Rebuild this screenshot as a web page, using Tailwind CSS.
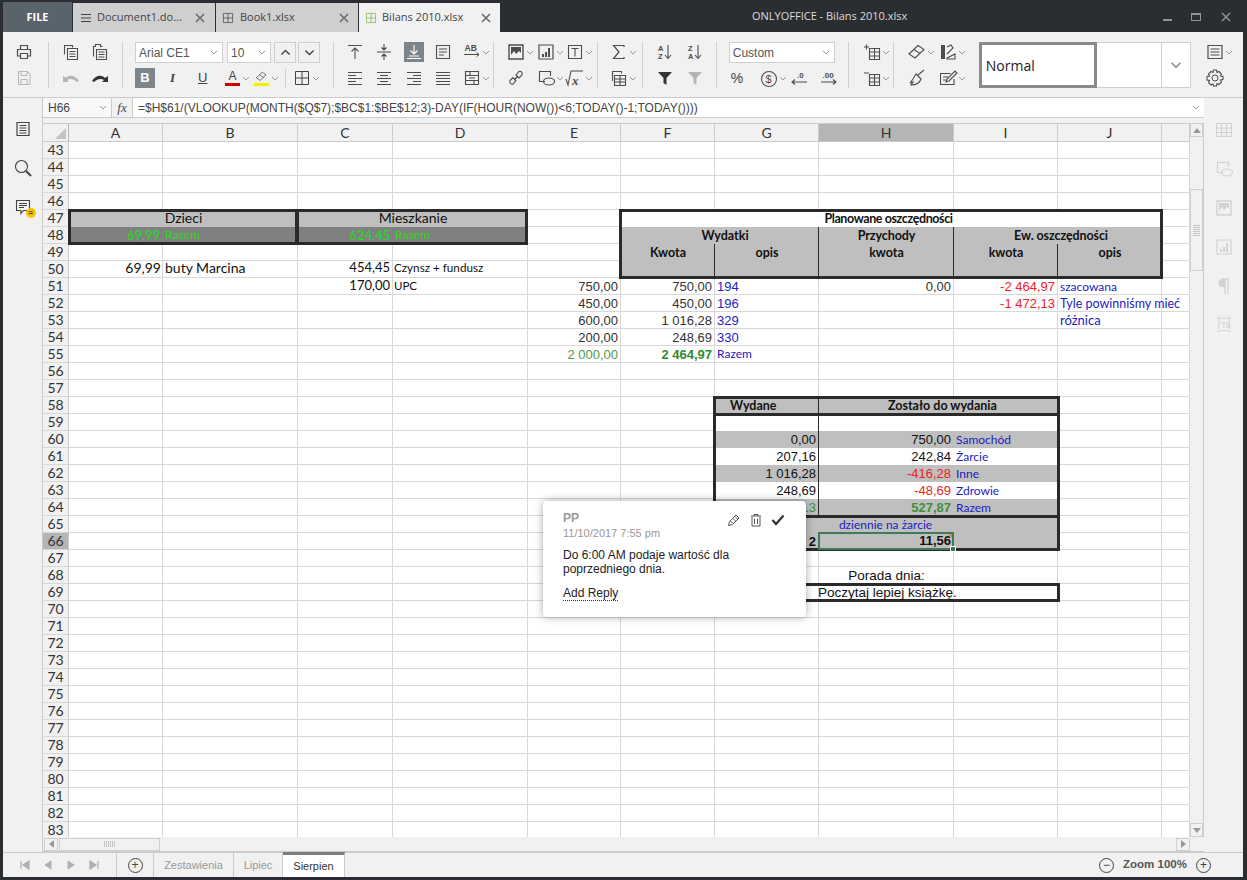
<!DOCTYPE html>
<html lang="en">
<head>
<meta charset="UTF-8">
<title>ONLYOFFICE - Bilans 2010.xlsx</title>
<script src="https://cdn.jsdelivr.net/npm/@tailwindcss/browser@4"></script>
</head>
<body class="bg-[#2a2e32] font-['Liberation_Sans',sans-serif] overflow-hidden">

<!-- icon set -->
<svg class="absolute w-0 h-0">
  <symbol id="c" viewBox="0 0 8 5"><path d="M1 1l3 3 3-3"/></symbol>
  <symbol id="x" viewBox="0 0 10 10"><path d="M1 1l8 8M9 1l-8 8" stroke-width="1.500"/></symbol>
  <symbol id="print" viewBox="0 0 20 20"><path d="M6.500 7V3.500h7V7M6.500 14h-3V7.500h13V14h-3M6.500 11.500h7v5h-7z" stroke-width="1.200"/></symbol>
  <symbol id="save" viewBox="0 0 20 20"><path d="M4.500 3.500h9l2.500 2.500v10.500H4.500zM7 3.500v4h6v-4M7 16.500v-5h6v5"/></symbol>
  <symbol id="copy" viewBox="0 0 20 20"><path d="M3.500 12.500v-9h8v2M6.500 6.500h10v11h-10zM8.500 9.500h6M8.500 12h6M8.500 14.500h6" stroke-width="1.100"/></symbol>
  <symbol id="paste" viewBox="0 0 20 20"><path d="M3.500 14.500v-10h2v-2h5v2h2M6.500 7.500h10v10h-10zM8.500 10h6M8.500 12.500h6M8.500 15h6" stroke-width="1.100"/></symbol>
  <symbol id="undo" viewBox="0 0 20 20"><path d="M2 8v6h6l-2-2c3-2 7-1 10 2l2-1c-3-5-9-7-13-3z" fill="currentColor" stroke="none"/></symbol>
  <symbol id="redo" viewBox="0 0 20 20"><path d="M18 8v6h-6l2-2c-3-2-7-1-10 2l-2-1c3-5 9-7 13-3z" fill="currentColor" stroke="none"/></symbol>
  <symbol id="atop" viewBox="0 0 20 20"><path d="M3 3.500h14M10 17V6.500M6.500 9.500L10 6l3.500 3.500" stroke-width="1.100"/></symbol>
  <symbol id="amid" viewBox="0 0 20 20"><path d="M3 10h14M10 2v5.500M7.500 5.500L10 8l2.500-2.500M10 18v-5.500M7.500 14.500L10 12l2.500 2.500" stroke-width="1.100"/></symbol>
  <symbol id="abot" viewBox="0 0 20 20"><path d="M3 16.500h14M5 14h10M10 3v9M6.500 8.500L10 12l3.500-3.500" stroke-width="1.100"/></symbol>
  <symbol id="wrap" viewBox="0 0 20 20"><path d="M3.500 3.500h13v13h-13zM6 7h8M6 10h8M6 13h5" stroke-width="1.100"/></symbol>
  <symbol id="left" viewBox="0 0 20 20"><path d="M3 4.500h14M3 7.500h8M3 10.500h14M3 13.500h8M3 16.500h14" stroke-width="1.100"/></symbol>
  <symbol id="center" viewBox="0 0 20 20"><path d="M3 4.500h14M6 7.500h8M3 10.500h14M6 13.500h8M3 16.500h14" stroke-width="1.100"/></symbol>
  <symbol id="right" viewBox="0 0 20 20"><path d="M3 4.500h14M9 7.500h8M3 10.500h14M9 13.500h8M3 16.500h14" stroke-width="1.100"/></symbol>
  <symbol id="just" viewBox="0 0 20 20"><path d="M3 4.500h14M3 7.500h14M3 10.500h14M3 13.500h14M3 16.500h14" stroke-width="1.100"/></symbol>
  <symbol id="merge" viewBox="0 0 20 20"><path d="M3.500 3.500h13v13h-13zM3.500 7.500h13M3.500 12.500h13M8 3.500v4M12 12.500v4M7 10h6" stroke-width="1.100"/></symbol>
  <symbol id="grid" viewBox="0 0 20 20"><path d="M3.500 3.500h13v13h-13zM10 3.500v13M3.500 10h13"/></symbol>
  <symbol id="img" viewBox="0 0 20 20"><path d="M3 3h14v14H3z" stroke-width="1.400"/><path d="M5 5h10v6l-2-2-3 3-2-3-3 4z" fill="currentColor" stroke="none"/></symbol>
  <symbol id="chart" viewBox="0 0 20 20"><path d="M3 3h14v14H3z" stroke-width="1.200"/><path d="M6 12h2v3H6zM9 10h2v5H9zM12 6h2v9h-2z" fill="currentColor" stroke="none"/></symbol>
  <symbol id="tbox" viewBox="0 0 20 20"><path d="M3.500 3.500h13v13h-13zM6.500 6.500h7M10 6.500v8" stroke-width="1.100"/></symbol>
  <symbol id="link" viewBox="0 0 20 20"><path d="M8 12l4-4M4 12.500l3-3 3 3-3 3.500c-2 1-4-1.500-3-3.500zM10 7l3-3.500c2-1 4 1.500 3 3.500l-3 3z" stroke-width="1.100"/></symbol>
  <symbol id="shape" viewBox="0 0 20 20"><path d="M9 13.500H3.500v-10h11V8" stroke-width="1.100"/><ellipse cx="13" cy="13.500" rx="5.500" ry="3.500" stroke-width="1.100"/></symbol>
  <symbol id="sum" viewBox="0 0 20 20"><path d="M15 5V3.500H4.500L10 10l-5.500 6.500H15V15" stroke-width="1.200"/></symbol>
  <symbol id="tbl" viewBox="0 0 20 20"><path d="M5.500 7.500h11v10h-11zM5.500 11h11M5.500 14h11M11 7.500v10M3.500 13V3.500h9v2" stroke-width="1.100"/></symbol>
  <symbol id="filter" viewBox="0 0 20 20"><path d="M3 4h14l-5.500 6v7l-3-2v-5z" fill="currentColor" stroke="none"/></symbol>
  <symbol id="cellp" viewBox="0 0 20 20"><path d="M7.500 6.500h10v11h-10zM7.500 10h10M7.500 14h10M12.500 6.500v11M2 5h5M4.500 2.500v5" stroke-width="1.100"/></symbol>
  <symbol id="cellm" viewBox="0 0 20 20"><path d="M7.500 6.500h10v11h-10zM7.500 10h10M7.500 14h10M12.500 6.500v11M2 5h5" stroke-width="1.100"/></symbol>
  <symbol id="eraser" viewBox="0 0 20 20"><path d="M2 12l9-8.500 6 4-9 8.500zM7 7.500l6 4" stroke-width="1.100"/></symbol>
  <symbol id="palette" viewBox="0 0 20 20"><path d="M3 3h4v14H3z" fill="currentColor" stroke="none"/><path d="M9 5l4-2 2 3-6 6M9 16l8-4v5H9z" stroke-width="1.100"/></symbol>
  <symbol id="brush" viewBox="0 0 20 20"><path d="M11 7l6-5M9 6l5 5c-1 3-4 6-10 6l2-3-3 1c2-2 4-6 6-9z" stroke-width="1.100"/></symbol>
  <symbol id="edit" viewBox="0 0 20 20"><path d="M16 11v5.500H2.500v-11h10M5 9h5M5 12h3M8 14l1-3 8-8 2 2-8 8z" stroke-width="1.100"/></symbol>
  <symbol id="list" viewBox="0 0 20 20"><path d="M3 3.500h14v13H3zM5.500 7h9M5.500 10h9M5.500 13h9" stroke-width="1.200"/></symbol>
  <symbol id="gear" viewBox="0 0 20 20"><circle cx="10" cy="10" r="3"/><path d="M8.500 2h3l.5 2.500 2-1 2.500 2.500-1 2 2.500.5v3l-2.500.5 1 2-2.500 2.500-2-1-.5 2.500h-3L8 16l-2 1-2.500-2.500 1-2L2 12V8.500L4.500 8l-1-2L6 3.500l2 1z" stroke-width="1.100"/></symbol>
  <symbol id="doc" viewBox="0 0 20 20"><path d="M4 3.500h12v13H4zM6.500 6.500h7M6.500 9h7M6.500 11.500h7M6.500 14h7" stroke-width="1.200"/></symbol>
  <symbol id="search" viewBox="0 0 20 20"><circle cx="8.500" cy="8.500" r="6" stroke-width="1.100"/><path d="M13 13l5 5" stroke-width="2"/></symbol>
  <symbol id="bubble" viewBox="0 0 20 20"><path d="M3.500 3.500h13v10h-6L8 16.500v-3H3.500zM6 6.500h8M6 8.500h8M6 10.500h5" stroke-width="1.100"/></symbol>
  <symbol id="sheet" viewBox="0 0 20 20"><path d="M2.500 3.500h15v13h-15zM2.500 8h15M2.500 12.500h15M7.500 3.500v13M12.500 3.500v13"/></symbol>
  <symbol id="para" viewBox="0 0 20 20"><path d="M8 3h7M11 3v15M14 3v15" stroke-width="1.300"/><path d="M11 3H8.500a4 4 0 000 8H11z" fill="currentColor" stroke="none"/></symbol>
</svg>

<div class="relative w-[1247px] h-[880px] flex flex-col pl-[3px] pr-[4px] pb-[3px] [&_svg]:fill-none [&_svg]:stroke-current">

  <!-- title bar -->
  <div class="relative h-[32px] flex items-end shrink-0 text-[11px] font-['Open_Sans',sans-serif] whitespace-nowrap">
    <div class="w-[69px] h-[30px] bg-[#59636b] text-white font-bold flex items-center justify-center">FILE</div>
    <div class="w-[142px] h-[29px] ml-px bg-[#cfcfcf] text-[#444] flex items-center pl-[6px]">
      <svg class="size-[14px] text-[#444]"><path d="M2 3.500h10M2 7h10M2 10.500h10"/></svg>
      <span class="ml-[4px] w-[98px]">Document1.do...</span>
      <svg class="size-[10px] text-[#666]"><use href="#x"/></svg>
    </div>
    <div class="w-[142px] h-[29px] ml-px bg-[#cfcfcf] text-[#444] flex items-center pl-[5px]">
      <svg class="size-[14px] text-[#444]"><use href="#grid"/></svg>
      <span class="ml-[5px] w-[99px]">Book1.xlsx</span>
      <svg class="size-[10px] text-[#666]"><use href="#x"/></svg>
    </div>
    <div class="w-[141px] h-[29px] ml-px bg-[#f1f1f1] text-[#444] flex items-center pl-[5px]">
      <svg class="size-[14px] text-[#7cb342]"><use href="#grid"/></svg>
      <span class="ml-[4px] w-[99px]">Bilans 2010.xlsx</span>
      <svg class="size-[10px] text-[#666]"><use href="#x"/></svg>
    </div>
    <div class="ml-[252px] h-[32px] flex items-center text-[#dcdcdc]">ONLYOFFICE - Bilans 2010.xlsx</div>
    <div class="absolute right-0 top-0 h-[34px] flex items-center text-[#8f9396]">
      <span class="w-[9px] h-[2px] bg-current mr-[19px] mt-[6px]"></span>
      <span class="w-[10px] h-[8px] border border-current border-t-2 mr-[20px]"></span>
      <svg class="size-[10px] mr-[12px]"><use href="#x"/></svg>
    </div>
  </div>

  <!-- toolbar -->
  <div class="h-[66px] shrink-0 bg-[#f1f1f1] flex items-start pt-[10px] border-b border-[#cbcbcb] text-[#4d4d4d]">
    <div class="ml-[11px] grid grid-cols-[20px] grid-rows-[20px_20px] gap-y-[6px]">
      <svg class="size-5"><use href="#print"/></svg>
      <svg class="size-5 text-[#b5b5b5]"><use href="#save"/></svg>
    </div>
    <div class="ml-[14px] w-px h-[46px] bg-[#cfcfcf]"></div>
    <div class="ml-[12px] grid grid-cols-[29px_29px] grid-rows-[20px_20px] gap-y-[6px]">
      <svg class="size-5"><use href="#copy"/></svg>
      <svg class="size-5"><use href="#paste"/></svg>
      <svg class="size-5 text-[#b5b5b5]"><use href="#undo"/></svg>
      <svg class="size-5 text-[#333]"><use href="#redo"/></svg>
    </div>
    <div class="ml-[3px] w-px h-[46px] bg-[#cfcfcf]"></div>
    <div class="ml-[12px] w-[186px] flex flex-col gap-[5px]">
      <div class="flex h-[21px] text-[12px] text-[#555]">
        <div class="w-[88px] bg-white border border-[#cfcfcf] flex items-center justify-between pl-[3px] pr-[4px]">Arial CE1<svg class="w-2 h-[5px] text-[#999]"><use href="#c"/></svg></div>
        <div class="ml-[4px] w-[44px] bg-white border border-[#cfcfcf] flex items-center justify-between pl-[3px] pr-[4px]">10<svg class="w-2 h-[5px] text-[#999]"><use href="#c"/></svg></div>
        <div class="ml-[3px] w-[22px] border border-[#cfcfcf] flex items-center justify-center"><svg class="w-[11px] h-[7px] rotate-180 text-[#444]"><use href="#c"/></svg></div>
        <div class="ml-[2px] w-[22px] border border-[#cfcfcf] flex items-center justify-center"><svg class="w-[11px] h-[7px] text-[#444]"><use href="#c"/></svg></div>
      </div>
      <div class="flex items-center h-[20px] text-[13px] text-[#444]">
        <div class="w-5 h-5 bg-[#7d858c] text-white font-bold flex items-center justify-center">B</div>
        <div class="ml-2 w-[29px] pl-[7px] italic font-['Liberation_Serif',serif] font-bold">I</div>
        <div class="w-[30px] pl-[6px] underline">U</div>
        <div class="w-[29px] flex items-center">
          <span class="w-[15px] ml-[3px] text-center leading-[13px] border-b-[3px] border-[#d40000] text-[12px]">A</span>
          <svg class="ml-[2px] w-2 h-[5px] text-[#999]"><use href="#c"/></svg>
        </div>
        <div class="w-[34px] flex items-center">
          <span class="ml-[3px] w-[15px] border-b-[3px] border-[#f5f000] flex justify-center"><svg class="size-[13px]"><use href="#eraser"/></svg></span>
          <svg class="ml-[2px] w-2 h-[5px] text-[#999]"><use href="#c"/></svg>
        </div>
        <div class="w-px h-5 bg-[#cfcfcf]"></div>
        <svg class="ml-[6px] size-5"><use href="#grid"/></svg>
        <svg class="w-2 h-[5px] text-[#999]"><use href="#c"/></svg>
      </div>
    </div>
    <div class="ml-[12px] w-px h-[46px] bg-[#cfcfcf]"></div>
    <div class="ml-[11px] grid grid-cols-[repeat(5,29.25px)] grid-rows-[20px_20px] gap-y-[6px] items-center">
      <svg class="size-5"><use href="#atop"/></svg>
      <svg class="size-5"><use href="#amid"/></svg>
      <span class="w-5 h-5 bg-[#7d858c] text-white"><svg class="size-5"><use href="#abot"/></svg></span>
      <svg class="size-5"><use href="#wrap"/></svg>
      <span class="flex items-center">
        <svg class="size-5" viewBox="0 0 20 20"><text x="2.500" y="9" font-size="8.500" font-weight="700" fill="currentColor" stroke="none">AB</text><path d="M2 12.500h15M14.500 10.500l2.500 2-2.500 2"/></svg>
        <svg class="w-2 h-[5px] text-[#999]"><use href="#c"/></svg>
      </span>
      <svg class="size-5"><use href="#left"/></svg>
      <svg class="size-5"><use href="#center"/></svg>
      <svg class="size-5"><use href="#right"/></svg>
      <svg class="size-5"><use href="#just"/></svg>
      <span class="flex items-center"><svg class="size-5"><use href="#merge"/></svg><svg class="w-2 h-[5px] text-[#999]"><use href="#c"/></svg></span>
    </div>
    <div class="ml-[2px] w-px h-[46px] bg-[#cfcfcf]"></div>
    <div class="ml-[12px] grid grid-cols-[repeat(3,29.5px)] grid-rows-[20px_20px] gap-y-[6px] items-center">
      <span class="flex items-center"><svg class="size-5"><use href="#img"/></svg><svg class="w-2 h-[5px] text-[#999]"><use href="#c"/></svg></span>
      <span class="flex items-center"><svg class="size-5"><use href="#chart"/></svg><svg class="w-2 h-[5px] text-[#999]"><use href="#c"/></svg></span>
      <span class="flex items-center"><svg class="size-5"><use href="#tbox"/></svg><svg class="w-2 h-[5px] text-[#999]"><use href="#c"/></svg></span>
      <svg class="size-5"><use href="#link"/></svg>
      <span class="flex items-center"><svg class="size-5"><use href="#shape"/></svg><svg class="w-2 h-[5px] text-[#999]"><use href="#c"/></svg></span>
      <span class="flex items-center">
        <svg class="size-5" viewBox="0 0 20 20"><path d="M1 11l2 6 3-14h12" stroke-width="1.100"/><text x="7" y="17" font-size="13" font-weight="700" font-style="italic" fill="currentColor" stroke="none" font-family="Liberation Serif">x</text></svg>
        <svg class="w-2 h-[5px] text-[#999]"><use href="#c"/></svg>
      </span>
    </div>
    <div class="ml-[2px] w-px h-[46px] bg-[#cfcfcf]"></div>
    <div class="ml-[11px] grid grid-cols-[29px] grid-rows-[20px_20px] gap-y-[6px] items-center">
      <span class="flex items-center"><svg class="size-5"><use href="#sum"/></svg><svg class="w-2 h-[5px] text-[#999]"><use href="#c"/></svg></span>
      <span class="flex items-center"><svg class="size-5"><use href="#tbl"/></svg><svg class="w-2 h-[5px] text-[#999]"><use href="#c"/></svg></span>
    </div>
    <div class="ml-[4px] w-px h-[46px] bg-[#cfcfcf]"></div>
    <div class="ml-[12px] grid grid-cols-[30px_30px] grid-rows-[20px_20px] gap-y-[6px]">
      <svg class="size-5" viewBox="0 0 20 20"><text x="3" y="9" font-size="7.500" font-weight="700" fill="currentColor" stroke="none">A</text><text x="3" y="17" font-size="7.500" font-weight="700" fill="currentColor" stroke="none">Z</text><path d="M13 3v13M10 13l3 3.500 3-3.500" stroke-width="1.100"/></svg>
      <svg class="size-5" viewBox="0 0 20 20"><text x="3" y="9" font-size="7.500" font-weight="700" fill="currentColor" stroke="none">Z</text><text x="3" y="17" font-size="7.500" font-weight="700" fill="currentColor" stroke="none">A</text><path d="M13 3v13M10 13l3 3.500 3-3.500" stroke-width="1.100"/></svg>
      <svg class="size-5 text-[#333]"><use href="#filter"/></svg>
      <svg class="size-5 text-[#b5b5b5]"><use href="#filter"/></svg>
    </div>
    <div class="ml-[1px] w-px h-[46px] bg-[#cfcfcf]"></div>
    <div class="ml-[12px] w-[106px] flex flex-col gap-[5px]">
      <div class="h-[21px] bg-white border border-[#cfcfcf] text-[12px] text-[#555] flex items-center justify-between pl-[3px] pr-[4px]">Custom<svg class="w-2 h-[5px] text-[#999]"><use href="#c"/></svg></div>
      <div class="grid grid-cols-[repeat(4,30px)] h-5 items-center">
        <span class="text-[14px] pl-[2px] text-[#444]">%</span>
        <span class="flex items-center">
          <svg class="size-5" viewBox="0 0 20 20"><circle cx="10" cy="10" r="7.500" stroke-width="1.100"/><text x="6.500" y="14" font-size="11" fill="currentColor" stroke="none">$</text></svg>
          <svg class="w-2 h-[5px] text-[#999]"><use href="#c"/></svg>
        </span>
        <svg class="size-5" viewBox="0 0 20 20"><text x="8" y="9" font-size="8" font-weight="700" fill="currentColor" stroke="none">.0</text><path d="M18 13H3M6 10.500L3 13l3 2.500" stroke-width="1.100"/></svg>
        <svg class="size-5" viewBox="0 0 20 20"><text x="3.500" y="9" font-size="8" font-weight="700" fill="currentColor" stroke="none">.00</text><path d="M2 13h15M14 10.500l3 2.500-3 2.500" stroke-width="1.100"/></svg>
      </div>
    </div>
    <div class="ml-[13px] w-px h-[46px] bg-[#cfcfcf]"></div>
    <div class="ml-[13px] grid grid-cols-[29px] grid-rows-[20px_20px] gap-y-[6px] items-center">
      <span class="flex items-center"><svg class="size-5"><use href="#cellp"/></svg><svg class="w-2 h-[5px] text-[#999]"><use href="#c"/></svg></span>
      <span class="flex items-center"><svg class="size-5"><use href="#cellm"/></svg><svg class="w-2 h-[5px] text-[#999]"><use href="#c"/></svg></span>
    </div>
    <div class="ml-[2px] w-px h-[46px] bg-[#cfcfcf]"></div>
    <div class="ml-[13px] grid grid-cols-[31px_31px] grid-rows-[20px_20px] gap-y-[6px] items-center">
      <span class="flex items-center"><svg class="size-5"><use href="#eraser"/></svg><svg class="w-2 h-[5px] text-[#999]"><use href="#c"/></svg></span>
      <span class="flex items-center"><svg class="size-5"><use href="#palette"/></svg><svg class="w-2 h-[5px] text-[#999]"><use href="#c"/></svg></span>
      <svg class="size-5"><use href="#brush"/></svg>
      <span class="flex items-center"><svg class="size-5"><use href="#edit"/></svg><svg class="w-2 h-[5px] text-[#999]"><use href="#c"/></svg></span>
    </div>
    <div class="ml-[10px] w-[212px] h-[46px] flex bg-white border border-[#cfcfcf]">
      <div class="w-[118px] -ml-px -my-px border-[3px] border-[#8a8a8a] flex items-center pl-[4px] text-[14px] text-[#222] font-['Open_Sans',sans-serif]">Normal</div>
      <div class="w-[65px] border-r border-[#cfcfcf]"></div>
      <div class="flex-1 flex items-center justify-center"><svg class="w-[12px] h-[8px] text-[#888]"><use href="#c"/></svg></div>
    </div>
    <div class="ml-[14px] grid grid-cols-[28px] grid-rows-[20px_20px] gap-y-[6px] items-center">
      <span class="flex items-center"><svg class="size-5"><use href="#list"/></svg><svg class="w-2 h-[5px] text-[#999]"><use href="#c"/></svg></span>
      <svg class="size-5"><use href="#gear"/></svg>
    </div>
  </div>

  <!-- main area -->
  <div class="flex-1 min-h-0 flex bg-[#f1f1f1]">
    <!-- left rail -->
    <div class="w-[40px] shrink-0 flex flex-col items-center pt-[21px] gap-[19px] text-[#444] border-r border-[#cbcbcb]">
      <svg class="size-5"><use href="#doc"/></svg>
      <svg class="size-5"><use href="#search"/></svg>
      <span class="relative size-5">
        <svg class="size-5"><use href="#bubble"/></svg>
        <span class="absolute right-[-3px] bottom-[-1px] w-[10px] h-[10px] rounded-full bg-[#f5c400] text-[8px] leading-[9px] text-center font-bold text-[#444]">=</span>
      </span>
    </div>

    <!-- centre -->
    <div class="flex-1 min-w-0 flex flex-col">
      <!-- formula bar -->
      <div class="h-[25px] shrink-0 pb-[5px]">
        <div class="h-[20px] flex bg-white border-b border-[#cbcbcb] text-[12px] text-[#444]">
          <div class="w-[69px] bg-[#f8f8f8] border-r border-[#cbcbcb] flex items-center justify-between pl-[5px] pr-[4px]">H66<svg class="w-2 h-[5px] text-[#999]"><use href="#c"/></svg></div>
          <div class="w-[21px] bg-[#f1f1f1] border-r border-[#cbcbcb] flex items-center justify-center italic font-['Liberation_Serif',serif] text-[13px]">fx</div>
          <div class="flex-1 flex items-center justify-between pl-[5px] pr-[4px] whitespace-nowrap">=$H$61/(VLOOKUP(MONTH($Q$7);$BC$1:$BE$12;3)-DAY(IF(HOUR(NOW())&lt;6;TODAY()-1;TODAY())))<svg class="w-2 h-[5px] text-[#999]"><use href="#c"/></svg></div>
        </div>
      </div>

      <div class="flex-1 min-h-0 flex">
        <div class="flex-1 min-w-0 overflow-hidden bg-white">
          <!-- column headers -->
          <div class="h-[19px] flex bg-[#f1f1f1] border-y border-[#cbcbcb] font-['Lato',sans-serif] text-[14px] text-[#333] leading-[17px]">
            <div class="relative w-[26px] border-r border-[#b5b5b5]"><span class="absolute right-[2px] bottom-[2px] w-0 h-0 border-l-[11px] border-l-transparent border-b-[11px] border-b-[#c4c4c4]"></span></div>
            <div class="grid grid-cols-[94px_135px_95px_135px_93px_94px_104px_135px_104px_104px_28px] text-center [&>div]:border-r [&>div]:border-[#cbcbcb]">
              <div>A</div><div>B</div><div>C</div><div>D</div><div>E</div><div>F</div><div>G</div><div class="bg-[#b5b5b5]">H</div><div>I</div><div>J</div><div></div>
            </div>
          </div>

          <div class="flex">
            <!-- row headers -->
            <div class="w-[26px] shrink-0 bg-[#f1f1f1] border-r border-[#cbcbcb] font-['Lato',sans-serif] text-[14px] text-[#333] text-center leading-[16px] [&>div]:h-[17px] [&>div]:border-b [&>div]:border-[#d8d8d8]">
              <div>43</div><div>44</div><div>45</div><div>46</div><div>47</div><div>48</div><div>49</div><div>50</div><div>51</div><div>52</div><div>53</div><div>54</div><div>55</div><div>56</div><div>57</div><div>58</div><div>59</div><div>60</div><div>61</div><div>62</div><div>63</div><div>64</div><div>65</div><div class="bg-[#b5b5b5]">66</div><div>67</div><div>68</div><div>69</div><div>70</div><div>71</div><div>72</div><div>73</div><div>74</div><div>75</div><div>76</div><div>77</div><div>78</div><div>79</div><div>80</div><div>81</div><div>82</div><div>83</div>
            </div>

            <!-- sheet -->
            <div class="grid grid-cols-[94px_135px_95px_135px_93px_94px_104px_135px_104px_104px_28px] grid-rows-[repeat(41,17px)] text-[13px] leading-[18px] whitespace-nowrap text-[#111]">
              <!-- grid lines -->
              <div class="col-start-1 col-span-full row-start-1 row-span-full flex flex-col [&>div]:h-[17px] [&>div]:shrink-0 [&>div]:border-b [&>div]:border-[#d8d8d8]">
                <div></div><div></div><div></div><div></div><div></div><div></div><div></div><div></div><div></div><div></div><div></div><div></div><div></div><div></div><div></div><div></div><div></div><div></div><div></div><div></div><div></div><div></div><div></div><div></div><div></div><div></div><div></div><div></div><div></div><div></div><div></div><div></div><div></div><div></div><div></div><div></div><div></div><div></div><div></div><div></div><div></div>
              </div>
              <div class="col-start-1 col-span-full row-start-1 row-span-full grid grid-cols-subgrid [&>div]:border-r [&>div]:border-[#d8d8d8]">
                <div></div><div></div><div></div><div></div><div></div><div></div><div></div><div></div><div></div><div></div><div></div>
              </div>

              <!-- Dzieci / Mieszkanie -->
              <div class="col-start-1 col-span-2 row-start-5 bg-[#bfbfbf] text-center font-['Lato',sans-serif] text-[14px] leading-[16px]">Dzieci</div>
              <div class="col-start-3 col-span-2 row-start-5 bg-[#bfbfbf] text-center font-['Lato',sans-serif] text-[14px] leading-[16px]">Mieszkanie</div>
              <div class="col-start-1 row-start-6 bg-[#808080] text-right pr-[3px] text-[#22dd22] font-['Lato',sans-serif] leading-[16px]">69,99</div>
              <div class="col-start-2 row-start-6 bg-[#808080] pl-[2px] text-[#22dd22] font-['Lato',sans-serif] text-[12px] leading-[16px]">Razem</div>
              <div class="col-start-3 row-start-6 bg-[#808080] text-right pr-[3px] text-[#22dd22] font-['Lato',sans-serif] leading-[16px]">624,45</div>
              <div class="col-start-4 row-start-6 bg-[#808080] pl-[2px] text-[#22dd22] font-['Lato',sans-serif] text-[12px] leading-[16px]">Razem</div>
              <div class="col-start-1 col-span-2 row-start-5 row-span-2 -mt-px -ml-px h-[36px] border-[3px] border-[#2a2a2a]"></div>
              <div class="col-start-3 col-span-2 row-start-5 row-span-2 -mt-px -ml-[2px] h-[36px] border-[3px] border-[#2a2a2a]"></div>

              <div class="col-start-1 row-start-8 text-right pr-[2px] font-['Lato',sans-serif] text-[14px] leading-[13px]">69,99</div>
              <div class="col-start-2 row-start-8 pl-[2px] font-['Lato',sans-serif] text-[14px] leading-[13px]">buty Marcina</div>
              <div class="col-start-3 row-start-8 text-right pr-[3px] font-['Lato',sans-serif] text-[13px] leading-[13px]">454,45</div>
              <div class="col-start-4 row-start-8 pl-[1px] font-['Lato',sans-serif] text-[11.7px] leading-[13px]">Czynsz + fundusz</div>
              <div class="col-start-3 row-start-9 text-right pr-[3px] font-['Lato',sans-serif] text-[13px] leading-[15px]">170,00</div>
              <div class="col-start-4 row-start-9 pl-[1px] font-['Lato',sans-serif] text-[11.5px] leading-[16px]">UPC</div>

              <!-- Planowane oszczednosci -->
              <div class="col-start-6 col-span-5 row-start-5 bg-white text-center font-bold font-['Lato',sans-serif] text-[12.5px] tracking-[-0.4px] pr-[6px]">Planowane oszczędności</div>
              <div class="col-start-6 col-span-2 row-start-6 bg-[#bfbfbf] text-center font-bold font-['Lato',sans-serif] text-[12.5px] pl-[10px]">Wydatki</div>
              <div class="col-start-8 row-start-6 bg-[#bfbfbf] text-center font-bold font-['Lato',sans-serif] text-[12.5px] tracking-[-0.1px]">Przychody</div>
              <div class="col-start-9 col-span-2 row-start-6 bg-[#bfbfbf] text-center font-bold font-['Lato',sans-serif] text-[12.5px] tracking-[-0.1px] pl-[6px]">Ew. oszczędności</div>
              <div class="col-start-6 row-start-7 row-span-2 bg-[#bfbfbf] text-center font-bold font-['Lato',sans-serif] text-[12.5px]">Kwota</div>
              <div class="col-start-7 row-start-7 row-span-2 bg-[#bfbfbf] text-center font-bold font-['Lato',sans-serif] text-[12.5px] border-l border-[#2a2a2a] -ml-px">opis</div>
              <div class="col-start-8 row-start-7 row-span-2 bg-[#bfbfbf] text-center font-bold font-['Lato',sans-serif] text-[12.5px]">kwota</div>
              <div class="col-start-9 row-start-7 row-span-2 bg-[#bfbfbf] text-center font-bold font-['Lato',sans-serif] text-[12.5px]">kwota</div>
              <div class="col-start-10 row-start-7 row-span-2 bg-[#bfbfbf] text-center font-bold font-['Lato',sans-serif] text-[12.5px] border-l border-[#2a2a2a] -ml-px">opis</div>
              <div class="col-start-8 row-start-6 row-span-3 border-x border-[#2a2a2a] -ml-px"></div>
              <div class="col-start-6 col-span-5 row-start-5 row-span-4 -mt-px -ml-[2px] mr-[-1px] h-[70px] border-[3px] border-[#2a2a2a]"></div>

              <!-- values 51-55 -->
              <div class="col-start-5 row-start-9 text-right pr-[3px] text-[#333]">750,00</div>
              <div class="col-start-6 row-start-9 text-right pr-[3px] text-[#333]">750,00</div>
              <div class="col-start-7 row-start-9 pl-[2px] text-[#1c1cc4]">194</div>
              <div class="col-start-8 row-start-9 text-right pr-[3px] text-[#333]">0,00</div>
              <div class="col-start-9 row-start-9 text-right pr-[3px] text-[#ee2222]">-2 464,97</div>
              <div class="col-start-10 row-start-9 pl-[2px] text-[#1c1cc4] font-['Lato',sans-serif] text-[12px]">szacowana</div>
              <div class="col-start-5 row-start-10 text-right pr-[3px] text-[#333]">450,00</div>
              <div class="col-start-6 row-start-10 text-right pr-[3px] text-[#333]">450,00</div>
              <div class="col-start-7 row-start-10 pl-[2px] text-[#1c1cc4]">196</div>
              <div class="col-start-9 row-start-10 text-right pr-[3px] text-[#ee2222]">-1 472,13</div>
              <div class="col-start-10 col-span-2 row-start-10 pl-[2px] text-[#1c1cc4] font-['Lato',sans-serif] text-[12.5px]">Tyle powinniśmy mieć</div>
              <div class="col-start-5 row-start-11 text-right pr-[3px] text-[#333]">600,00</div>
              <div class="col-start-6 row-start-11 text-right pr-[3px] text-[#333]">1 016,28</div>
              <div class="col-start-7 row-start-11 pl-[2px] text-[#1c1cc4]">329</div>
              <div class="col-start-10 row-start-11 pl-[2px] text-[#1c1cc4] font-['Lato',sans-serif] leading-[16px]">różnica</div>
              <div class="col-start-5 row-start-12 text-right pr-[3px] text-[#333]">200,00</div>
              <div class="col-start-6 row-start-12 text-right pr-[3px] text-[#333]">248,69</div>
              <div class="col-start-7 row-start-12 pl-[2px] text-[#1c1cc4]">330</div>
              <div class="col-start-5 row-start-13 text-right pr-[3px] text-[#4c9a4c]">2 000,00</div>
              <div class="col-start-6 row-start-13 text-right pr-[3px] text-[#2e8b2e] font-bold">2 464,97</div>
              <div class="col-start-7 row-start-13 pl-[2px] text-[#1c1cc4] font-['Lato',sans-serif] text-[12px] leading-[16px]">Razem</div>

              <!-- Wydane -->
              <div class="col-start-7 row-start-16 bg-[#bfbfbf] pl-[15px] font-bold font-['Lato',sans-serif] text-[12.5px]">Wydane</div>
              <div class="col-start-8 col-span-2 row-start-16 bg-[#bfbfbf] pl-[69px] font-bold font-['Lato',sans-serif] text-[12.5px]">Zostało do wydania</div>
              <div class="col-start-7 col-span-3 row-start-17 bg-white"></div>
              <div class="col-start-7 row-start-18 bg-[#bfbfbf] text-right pr-[3px]">0,00</div>
              <div class="col-start-8 row-start-18 bg-[#bfbfbf] text-right pr-[3px]">750,00</div>
              <div class="col-start-9 row-start-18 bg-[#bfbfbf] pl-[2px] text-[#1c1cc4] font-['Lato',sans-serif] text-[12px]">Samochód</div>
              <div class="col-start-7 row-start-19 bg-white text-right pr-[3px]">207,16</div>
              <div class="col-start-8 row-start-19 bg-white text-right pr-[3px]">242,84</div>
              <div class="col-start-9 row-start-19 bg-white pl-[2px] text-[#1c1cc4] font-['Lato',sans-serif] text-[12px]">Żarcie</div>
              <div class="col-start-7 row-start-20 bg-[#bfbfbf] text-right pr-[3px]">1 016,28</div>
              <div class="col-start-8 row-start-20 bg-[#bfbfbf] text-right pr-[3px] text-[#ee2222]">-416,28</div>
              <div class="col-start-9 row-start-20 bg-[#bfbfbf] pl-[2px] text-[#1c1cc4] font-['Lato',sans-serif] text-[12px]">Inne</div>
              <div class="col-start-7 row-start-21 bg-white text-right pr-[3px]">248,69</div>
              <div class="col-start-8 row-start-21 bg-white text-right pr-[3px] text-[#ee2222]">-48,69</div>
              <div class="col-start-9 row-start-21 bg-white pl-[2px] text-[#1c1cc4] font-['Lato',sans-serif] text-[12px]">Zdrowie</div>
              <div class="col-start-7 row-start-22 bg-[#bfbfbf] text-right pr-[3px] text-[#3f8f3f]">13</div>
              <div class="col-start-8 row-start-22 bg-[#bfbfbf] text-right pr-[3px] text-[#3f8f3f] font-bold">527,87</div>
              <div class="col-start-9 row-start-22 bg-[#bfbfbf] pl-[2px] text-[#1c1cc4] font-['Lato',sans-serif] text-[12px]">Razem</div>
              <div class="col-start-7 col-span-3 row-start-23 row-span-2 bg-[#bfbfbf]"></div>
              <div class="col-start-8 row-start-23 text-center text-[#1c1cc4] font-['Lato',sans-serif] text-[12px] pr-[2px]">dziennie na żarcie</div>
              <div class="col-start-7 row-start-24 text-right pr-[3px] font-bold">2</div>
              <div class="col-start-8 row-start-16 row-span-7 border-l border-[#2a2a2a] -ml-px"></div>
              <div class="col-start-7 col-span-3 row-start-16 h-[19px] border-b-[3px] border-[#2a2a2a]"></div>
              <div class="col-start-7 col-span-3 row-start-23 -mt-px h-[3px] bg-[#2a2a2a]"></div>
              <div class="col-start-7 col-span-3 row-start-16 row-span-9 -mt-px -ml-[2px] mr-[-2px] h-[155px] border-[3px] border-[#2a2a2a]"></div>

              <!-- selected cell H66 -->
              <div class="relative col-start-8 row-start-24 -ml-px -mt-px h-[18px] border-2 border-[#3e7a5c] text-right pr-px font-bold leading-[13px]">11,56
                <span class="absolute right-[-4px] bottom-[-4px] w-[6px] h-[6px] bg-[#3e7a5c] border border-white"></span>
                <span class="absolute right-0 top-0 w-0 h-0 border-l-[4px] border-l-transparent border-t-[4px] border-t-[#f08020]"></span>
              </div>

              <!-- Porada dnia -->
              <div class="col-start-8 row-start-26 text-center text-[13.5px]">Porada dnia:</div>
              <div class="col-start-7 col-span-3 row-start-27 -mt-px -ml-[2px] mr-[-2px] h-[19px] border-[3px] border-[#2a2a2a] pl-[102px] leading-[13px] text-[13.5px]">Poczytaj lepiej książkę.</div>
            </div>
          </div>
        </div>

        <!-- vertical scrollbar -->
        <div class="w-[14px] shrink-0 relative bg-[#f1f1f1] border-r border-[#cbcbcb]">
          <div class="absolute left-0 top-0 w-[13px] h-[14px] border border-[#cfcfcf] flex items-center justify-center"><span class="w-0 h-0 border-x-[4px] border-x-transparent border-b-[5px] border-b-[#999]"></span></div>
          <div class="absolute left-0 top-[66px] w-[13px] h-[82px] border border-[#cfcfcf] flex flex-col items-center justify-center gap-px">
            <span class="w-[7px] h-px bg-[#c4c4c4]"></span><span class="w-[7px] h-px bg-[#c4c4c4]"></span><span class="w-[7px] h-px bg-[#c4c4c4]"></span><span class="w-[7px] h-px bg-[#c4c4c4]"></span><span class="w-[7px] h-px bg-[#c4c4c4]"></span><span class="w-[7px] h-px bg-[#c4c4c4]"></span>
          </div>
          <div class="absolute left-0 bottom-0 w-[13px] h-[14px] border border-[#cfcfcf] flex items-center justify-center"><span class="w-0 h-0 border-x-[4px] border-x-transparent border-t-[5px] border-t-[#999]"></span></div>
        </div>
      </div>

      <!-- horizontal scrollbar -->
      <div class="h-[15px] shrink-0 flex items-center pl-[1px] pr-[14px] border-b border-[#cbcbcb]">
        <div class="w-[14px] h-[13px] border border-[#cfcfcf] flex items-center justify-center"><span class="w-0 h-0 border-y-[4px] border-y-transparent border-r-[5px] border-r-[#999]"></span></div>
        <div class="ml-[1px] w-[101px] h-[13px] border border-[#cfcfcf] flex items-center justify-center gap-px">
          <span class="w-px h-[6px] bg-[#c4c4c4]"></span><span class="w-px h-[6px] bg-[#c4c4c4]"></span><span class="w-px h-[6px] bg-[#c4c4c4]"></span><span class="w-px h-[6px] bg-[#c4c4c4]"></span><span class="w-px h-[6px] bg-[#c4c4c4]"></span><span class="w-px h-[6px] bg-[#c4c4c4]"></span>
        </div>
        <div class="ml-auto w-[14px] h-[13px] border border-[#cfcfcf] flex items-center justify-center"><span class="w-0 h-0 border-y-[4px] border-y-transparent border-l-[5px] border-l-[#999]"></span></div>
      </div>
    </div>

    <!-- right rail -->
    <div class="w-[39px] shrink-0 flex flex-col items-center pt-[22px] gap-[19px] text-[#d2d2d2]">
      <svg class="size-5"><use href="#sheet"/></svg>
      <svg class="size-5"><use href="#shape"/></svg>
      <svg class="size-5"><use href="#img"/></svg>
      <svg class="size-5"><use href="#chart"/></svg>
      <svg class="size-5"><use href="#para"/></svg>
      <svg class="size-5" viewBox="0 0 20 20"><path d="M3 3h14M3 17c4-2 10-2 14 0M5 3v11M15 3v11"/><text x="7" y="13" font-size="9" fill="currentColor" stroke="none">Ta</text></svg>
    </div>
  </div>

  <!-- sheet tabs / status -->
  <div class="h-[25px] shrink-0 bg-[#f1f1f1] border-t border-[#cbcbcb] flex items-stretch text-[11px] text-[#999]">
    <div class="w-[114px] flex items-center pl-[17px] gap-[13px] border-r border-[#cbcbcb] text-[#b0b0b0]">
      <svg class="w-[10px] h-[10px] !fill-current" viewBox="0 0 10 10"><path d="M1 1v8M9 1v8L3 5z" stroke-width="1.200"/></svg>
      <svg class="w-[10px] h-[10px] !fill-current" viewBox="0 0 10 10"><path d="M8 1v8L2 5z"/></svg>
      <svg class="w-[10px] h-[10px] !fill-current" viewBox="0 0 10 10"><path d="M2 1v8l6-4z"/></svg>
      <svg class="w-[10px] h-[10px] !fill-current" viewBox="0 0 10 10"><path d="M9 1v8M1 1v8l6-4z" stroke-width="1.200"/></svg>
    </div>
    <div class="w-[37px] flex items-center justify-center border-r border-[#cbcbcb]">
      <span class="w-[15px] h-[15px] rounded-full border border-[#444] text-[#444] flex items-center justify-center leading-none text-[12px]">+</span>
    </div>
    <div class="w-[80px] flex items-center justify-center border-r border-[#cbcbcb]">Zestawienia</div>
    <div class="w-[49px] flex items-center justify-center border-r border-[#cbcbcb]">Lipiec</div>
    <div class="w-[62px] -mt-px bg-white border-t-[3px] border-r border-t-[#7d7d7d] border-r-[#cbcbcb] flex items-center justify-center text-[#333]">Sierpien</div>
    <div class="ml-auto flex items-center pr-[32px] text-[#444] whitespace-nowrap">
      <span class="w-[15px] h-[15px] rounded-full border border-[#444] flex items-center justify-center leading-none text-[12px]">−</span>
      <span class="ml-[9px] w-[62px] font-bold text-[11.5px] text-[#555]">Zoom 100%</span>
      <span class="ml-[11px] w-[15px] h-[15px] rounded-full border border-[#444] flex items-center justify-center leading-none text-[12px]">+</span>
    </div>
  </div>

  <!-- comment popup -->
  <div class="absolute left-[543px] top-[501px] w-[263px] h-[116px] bg-white rounded-[4px] shadow-[0_0_8px_rgba(0,0,0,0.35)] pl-[20px] pt-[10px] text-[#222]">
    <div class="font-bold text-[12px] leading-[14px] text-[#999]">PP</div>
    <div class="text-[11px] leading-[14px] mt-[1px] text-[#999]">11/10/2017 7:55 pm</div>
    <div class="text-[12px] leading-[14px] mt-[8px]">Do 6:00 AM podaje wartość dla<br>poprzedniego dnia.</div>
    <div class="text-[12px] leading-[14px] mt-[10px] w-fit border-b border-dotted border-[#333]">Add Reply</div>
    <div class="absolute top-[11px] left-[183px] flex gap-[6px] text-[#555]">
      <svg class="size-4"><path d="M2.500 13.500l1-4 6.500-6.500 3 3-6.500 6.500zM4.500 9l2.500 2.500M7 6.500l2.500 2.500M9 4.500l2.500 2.500"/></svg>
      <svg class="size-4"><path d="M3 4h10M6 4V2.500h4V4M4 4.500V14h8V4.500M6.500 6.500V12M9.500 6.500V12"/></svg>
      <svg class="size-4 text-[#333]"><path d="M2.500 8l3.500 4 7.500-8.500" stroke-width="2.200"/></svg>
    </div>
  </div>
</div>
</body>
</html>
